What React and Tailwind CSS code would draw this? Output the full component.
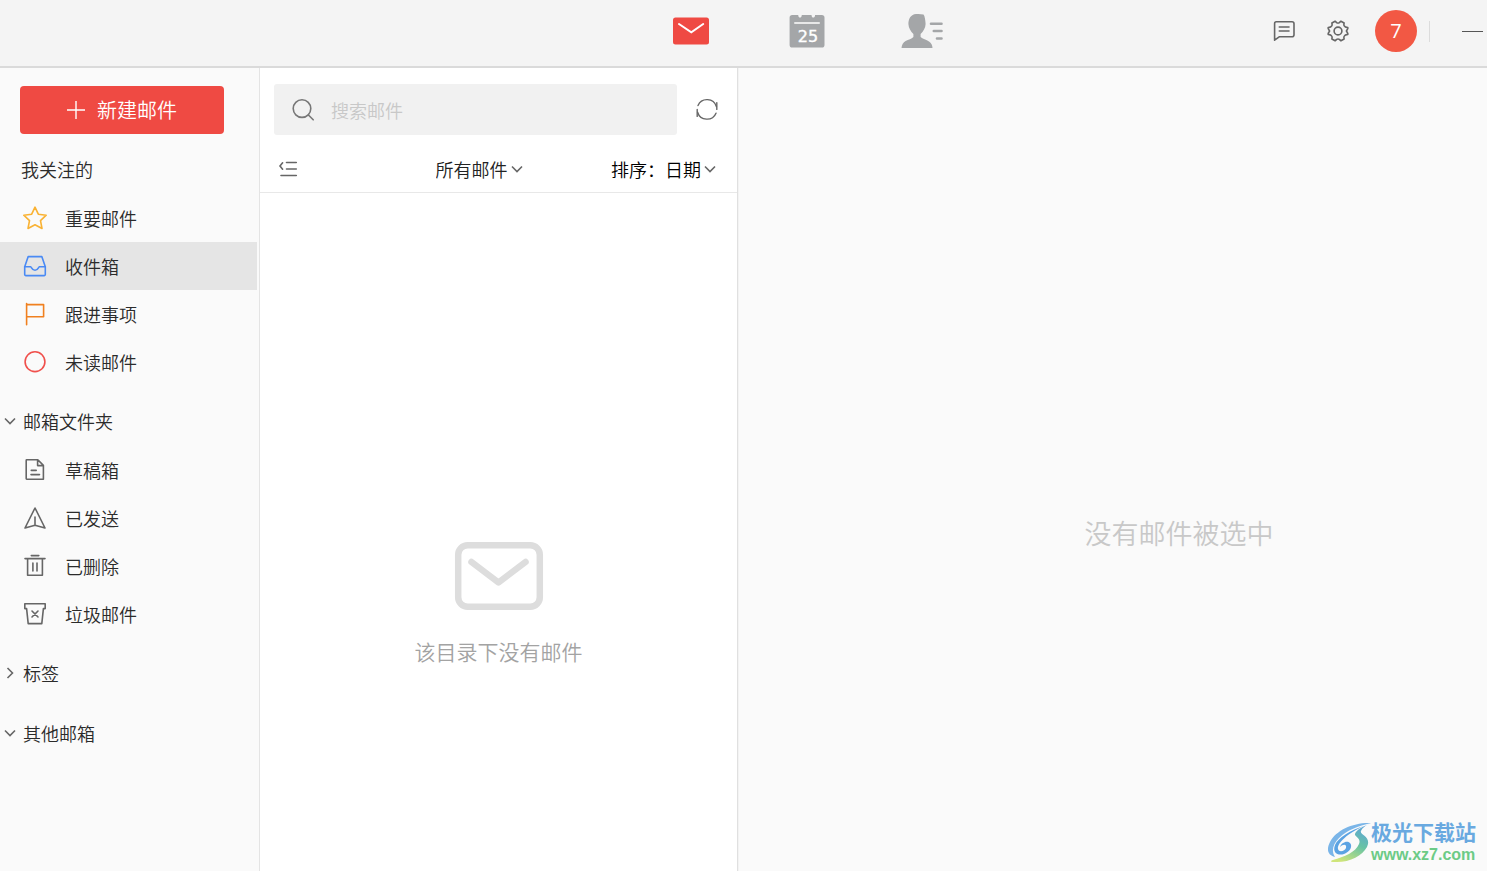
import React from 'react';
import clsx from 'clsx';

const MailIcon = () => (
  <svg width="36" height="28" viewBox="0 0 36 28" fill="none">
    <rect x="0" y="0.5" width="36" height="27" rx="2.5" fill="#ef4a43" />
    <path d="M6 7L18.3 15.3L30.2 7" stroke="#fff" strokeWidth="2" strokeLinecap="round" />
  </svg>
);

const CalendarIcon = () => (
  <svg width="36" height="34" viewBox="0 0 36 34" fill="none">
    <path
      d="M3.2 1H9.2C9.4 2.8 10 3.6 11 3.6C12 3.6 12.6 2.8 12.8 1H22.5C22.7 2.8 23.3 3.6 24.3 3.6C25.3 3.6 25.9 2.8 26.1 1H32.9C34.5 1 35.5 2 35.5 3.6V31C35.5 32.6 34.5 33.6 32.9 33.6H3.2C1.6 33.6 0.6 32.6 0.6 31V3.6C0.6 2 1.6 1 3.2 1Z"
      fill="#a4a6a8"
    />
    <path d="M6 9H30" stroke="#e8e8e8" strokeWidth="2" strokeLinecap="round" />
    <text
      x="19"
      y="28"
      textAnchor="middle"
      fontSize="16"
      fontWeight="400"
      fontFamily="DejaVu Sans, sans-serif"
      fill="#fff"
      stroke="#fff"
      strokeWidth="0.4"
    >
      25
    </text>
  </svg>
);

const ContactsIcon = () => (
  <svg width="42" height="36" viewBox="0 0 42 36" fill="none">
    <path
      d="M15 1C18 0.8 20 1 22.5 1.4C23.8 3 24.4 7 24.6 11C24.5 15 22.2 18.6 19.6 21V24C21.5 26 25.5 26.6 28 28.4C30.3 30 31.4 32 31.5 35H0.5C0.8 31.6 2.2 29.4 4.6 28C7.5 26.5 10.6 26 12.4 24V21C9.8 18.5 7.6 15 7.4 11C7.4 5.5 10 1.4 15 1Z"
      fill="#a4a6a8"
    />
    <path d="M30 10.8H40.5M32.8 18H40.5M36 25.5H40.5" stroke="#a4a6a8" strokeWidth="2.6" strokeLinecap="round" />
  </svg>
);

const LineIcon = ({ size = 24, color = '#666', width = 1.6, children }) => (
  <svg
    width={size}
    height={size}
    viewBox="0 0 24 24"
    fill="none"
    stroke={color}
    strokeWidth={width}
    strokeLinecap="round"
    strokeLinejoin="round"
    className="shrink-0"
  >
    {children}
  </svg>
);

const StarIcon = () => (
  <LineIcon color="#f9b233">
    <path d="M12 1.2L15.3 8.2L23.2 9.2L17.5 14.6L19 22.5L12 18.8L5 22.5L6.5 14.6L0.8 9.2L8.7 8.2Z" />
  </LineIcon>
);

const InboxIcon = () => (
  <LineIcon color="#4a8af4">
    <path d="M5.2 2.6H18.8L22.3 12.7V20.6Q22.3 21.6 21.3 21.6H2.7Q1.7 21.6 1.7 20.6V12.7Z" />
    <path d="M1.7 12.7H7.6C8.6 12.9 8.9 16.3 12 16.3C15.1 16.3 15.4 12.9 16.4 12.7H22.3" />
  </LineIcon>
);

const FlagIcon = () => (
  <LineIcon color="#f0801f">
    <path d="M3.6 1.5V22.8M3.6 2.6H20.6V14.8H3.6" />
  </LineIcon>
);

const UnreadIcon = () => (
  <LineIcon color="#f0504c">
    <circle cx="12" cy="11.7" r="9.9" />
  </LineIcon>
);

const DraftIcon = () => (
  <LineIcon>
    <path d="M3.6 1.8H14.8L20.4 7.4V21.2H3.6Q3.2 21.2 3.2 20.6V2.4Q3.2 1.8 3.6 1.8ZM14.6 2V7.6H20.2M8.3 12.4H13.2M8 16.6H16.5" />
  </LineIcon>
);

const SentIcon = () => (
  <LineIcon>
    <path d="M12 2L22 22L12 19.2L2 22ZM12 11V19" />
  </LineIcon>
);

const TrashIcon = () => (
  <LineIcon>
    <path d="M8.3 1.6H15.8M2 4.6H22M4.6 4.6V21.2H19.4V4.6M9.9 9V17M14 9V17" />
  </LineIcon>
);

const SpamIcon = () => (
  <LineIcon>
    <path d="M1.8 1.8H22.2V6.6H20.4L18.8 21.6H5.2L3.6 6.6H1.8ZM9 9L15 15M15 9L9 15" />
  </LineIcon>
);

const Chevron = ({ right }) => (
  <svg
    width="12"
    height="12"
    viewBox="0 0 12 12"
    fill="none"
    stroke="#666"
    strokeWidth="1.6"
    className={clsx('pointer-events-none shrink-0', right && '-rotate-90')}
  >
    <path d="M1 3.5L6 8.5L11 3.5" />
  </svg>
);

const favourites = [
  { label: '重要邮件', Icon: StarIcon },
  { label: '收件箱', Icon: InboxIcon, active: true },
  { label: '跟进事项', Icon: FlagIcon },
  { label: '未读邮件', Icon: UnreadIcon },
];

const folders = [
  { label: '草稿箱', Icon: DraftIcon },
  { label: '已发送', Icon: SentIcon },
  { label: '已删除', Icon: TrashIcon },
  { label: '垃圾邮件', Icon: SpamIcon },
];

const FolderList = ({ items }) => (
  <ul>
    {items.map(({ label, Icon, active }) => (
      <li key={label} className="pr-0.5">
        <a
          href="#"
          aria-current={active ? 'page' : undefined}
          className={clsx('flex h-12 items-center gap-[18px] pl-[23px]', active && 'bg-[#e5e5e5]')}
        >
          <Icon />
          <span>{label}</span>
        </a>
      </li>
    ))}
  </ul>
);

const GroupButton = ({ label, open }) => (
  <button type="button" aria-expanded={open} className="mt-3 flex h-12 w-full items-center gap-[7px] pb-0.5 pl-1">
    <Chevron right={!open} />
    <span>{label}</span>
  </button>
);

const Header = () => (
  <header className="flex h-[68px] shrink-0 items-start border-b-2 border-[#dadada] bg-[#f4f4f4] pl-[124px]">
    <div className="flex-1" />
    <nav className="flex h-[62px] items-center">
      <a href="#" aria-label="邮件" className="flex w-[116px] justify-center">
        <MailIcon />
      </a>
      <a href="#" aria-label="日历" className="flex w-[116px] justify-center">
        <CalendarIcon />
      </a>
      <a href="#" aria-label="联系人" className="flex w-[114px] justify-center">
        <ContactsIcon />
      </a>
    </nav>
    <div className="flex h-[62px] flex-1 items-center justify-end">
      <button type="button" aria-label="反馈" className="mr-[30px]">
        <LineIcon>
          <path d="M4.2 2.8H20Q22 2.8 22 4.8V15.8Q22 17.8 20 17.8H7.2L2.6 21.2V4.8Q2.6 2.8 4.2 2.8ZM7.3 8H17M7.3 12H17" />
        </LineIcon>
      </button>
      <button type="button" aria-label="设置" className="mr-[25px]">
        <LineIcon>
          <path d="M9.1 2.2L10.6 3.6Q12 4.4 13.4 3.6L14.9 2.2L18.1 4Q17.6 6 18.2 6.9Q19 8.3 21.8 8.6V9.6L20.4 12L21.8 14.4V15.4Q19 15.7 18.2 17.1Q17.6 18 18.1 20L14.9 21.8L13.4 20.4Q12 19.6 10.6 20.4L9.1 21.8L5.9 20Q6.4 18 5.8 17.1Q5 15.7 2.2 15.4V14.4L3.6 12L2.2 9.6V8.6Q5 8.3 5.8 6.9Q6.4 6 5.9 4Z" />
          <circle cx="12" cy="12" r="3.9" />
        </LineIcon>
      </button>
      <button
        type="button"
        aria-label="账户"
        className="flex size-[42px] items-center justify-center rounded-full bg-[#f25844] font-['Open_Sans',sans-serif] text-xl font-normal text-white"
      >
        7
      </button>
      <div className="ml-3 h-[21px] w-px bg-[#dcdcdc]" />
      <button type="button" aria-label="最小化" className="flex h-8 items-center pr-1 pl-8">
        <span className="h-px w-[21px] bg-[#555]" />
      </button>
    </div>
  </header>
);

const Sidebar = () => (
  <aside className="w-[260px] shrink-0 border-r border-[#e4e4e4] bg-[#fafafa] pt-[18px]">
    <div className="pr-[35px] pl-5">
      <button
        type="button"
        className="flex h-12 w-full items-center justify-center gap-3 rounded bg-[#ef4a43] text-xl text-white"
      >
        <svg width="18" height="18" viewBox="0 0 18 18" stroke="#fff" strokeWidth="1.4">
          <path d="M9 0V18M0 9H18" />
        </svg>
        新建邮件
      </button>
    </div>
    <h2 className="mt-3 flex h-12 items-center pb-0.5 pl-[21px]">我关注的</h2>
    <FolderList items={favourites} />
    <GroupButton label="邮箱文件夹" open />
    <FolderList items={folders} />
    <GroupButton label="标签" open={false} />
    <GroupButton label="其他邮箱" open />
  </aside>
);

const MailList = () => (
  <section className="flex w-[478px] shrink-0 flex-col border-r border-[#e0e0e0] bg-white">
    <div className="flex items-center pt-4 pr-[18px] pl-3.5">
      <label className="flex h-[51px] flex-1 items-center gap-4 rounded-[3px] bg-[#f1f1f1] pl-[17px]">
        <LineIcon color="#777">
          <circle cx="11" cy="10.6" r="8.8" />
          <path d="M17.4 17L22.2 21.8" />
        </LineIcon>
        <input
          type="search"
          aria-label="搜索邮件"
          placeholder="搜索邮件"
          className="min-w-0 flex-1 bg-transparent outline-none placeholder:text-[#c8c8c8]"
        />
      </label>
      <button type="button" aria-label="刷新" className="ml-[18px]">
        <LineIcon width={1.4}>
          <path d="M3 7.6A9.8 9.8 0 0 1 21.4 8.6M21 15.2A9.8 9.8 0 0 1 2.6 14.2" />
          <path d="M21.8 4.6V11.4M2.2 18.4V11.4" />
        </LineIcon>
      </button>
    </div>
    <div className="flex h-[58px] items-center border-b border-[#e8e8e8] pt-2.5 pr-[21px] pl-[18px]">
      <div className="flex-1">
        <button type="button" aria-label="折叠侧栏" className="flex">
          <svg width="20" height="18" viewBox="0 0 20 18" fill="none" stroke="#666" strokeWidth="1.6" strokeLinecap="round">
            <path d="M8.5 2.5H18.3M8.5 9H18.3M3 15.5H18.3M4.6 2.8L2 6L4.6 9.2" />
          </svg>
        </button>
      </div>
      <div className="mr-9 flex items-center gap-[3px] text-[#222]">
        <select aria-label="筛选" className="field-sizing-content appearance-none">
          <option>所有邮件</option>
        </select>
        <Chevron />
      </div>
      <div className="flex flex-1 items-center justify-end text-black">
        <label htmlFor="sort">排序：</label>
        <div className="flex items-center gap-[3px]">
          <select id="sort" className="field-sizing-content appearance-none">
            <option>日期</option>
          </select>
          <Chevron />
        </div>
      </div>
    </div>
    <div className="flex flex-1 flex-col items-center justify-center gap-6 pt-[144px]">
      <svg width="90" height="70" viewBox="0 0 90 70" fill="none" stroke="#ddd" strokeWidth="6.5">
        <rect x="4.2" y="4.2" width="81.6" height="61.6" rx="9.5" />
        <path d="M17.5 21L44.5 41.5L71.5 21" strokeLinecap="round" strokeLinejoin="round" />
      </svg>
      <p className="text-[21px] leading-8 text-[#a3a3a3]">该目录下没有邮件</p>
    </div>
  </section>
);

const Watermark = () => (
  <div className="absolute right-[11px] bottom-1 flex items-center">
    <svg width="44" height="42" viewBox="0 0 44 42">
      <defs>
        <linearGradient id="swirl" x1="0.8" y1="0" x2="0.3" y2="1">
          <stop offset="0" stopColor="#5a9fe0" />
          <stop offset="0.5" stopColor="#68c3a4" />
          <stop offset="1" stopColor="#cfe57a" />
        </linearGradient>
      </defs>
      <path d="M44 1C27 0 9 8 3 20C-1 28 1 33 8 35C4 29 6 22 12 16C20 8 31 4 44 1Z" fill="#7ab5e8" />
      <path
        d="M37 4C23 8 11 16 8 23C5 31 11 34 17 32C23 30 26 24 23 21C20 18 14 21 13 25C16 22 20 22 19 26C18 29 12 31 11 27C10 21 21 11 37 4Z"
        fill="#5ba3e3"
      />
      <path d="M44 1C37 4 27 9 28 13C30 16 34 17 32 22C29 30 17 35 6 38C3 39 3 40 7 40C22 41 35 34 40 25C45 14 32 13 34 9C35 6 39 3 44 1Z" fill="url(#swirl)" />
    </svg>
    <div>
      <div className="text-[21px] leading-6 font-bold text-[#69a9e0]">极光下载站</div>
      <div className="font-['Liberation_Sans',sans-serif] text-base leading-6 font-bold text-[#6ccb86]">www.xz7.com</div>
    </div>
  </div>
);

export default function App() {
  return (
    <div className="relative flex min-h-screen flex-col overflow-hidden bg-[#fafafa] font-['Noto_Sans_CJK_SC',sans-serif] text-lg font-[350] text-[#2b2b2b]">
      <Header />
      <div className="flex flex-1">
        <Sidebar />
        <MailList />
        <main className="flex flex-1 items-center justify-center border-l border-[#f3f3f3] pt-[126px] pl-[132px]">
          <p className="text-[27px] text-[#c8c8c8]">没有邮件被选中</p>
        </main>
      </div>
      <Watermark />
    </div>
  );
}
